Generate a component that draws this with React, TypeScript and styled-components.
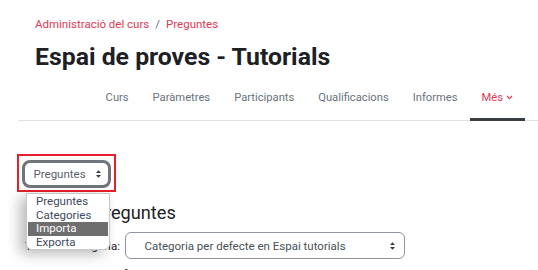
import React from "react";
import styled, { createGlobalStyle } from "styled-components";

const Global = createGlobalStyle`
  html, body { margin: 0; padding: 0; background: #fff; overflow: hidden; }
  body { font-family: Roboto, "Liberation Sans", sans-serif; color: #1d2125; }
  * { box-sizing: border-box; }
`;

const Page = styled.div`
  width: 538px;
  height: 270px;
  overflow: hidden;
`;

const Header = styled.header`
  padding: 15px 0 0 35px;
`;

const Breadcrumb = styled.nav`
  display: flex;
  align-items: center;
  gap: 6px;
  font-size: 11.5px;
  line-height: 18px;
  color: #de3a55;
`;

const Sep = styled.span`
  color: #6a737b;
`;

const Title = styled.h1`
  margin: 10px 0 0;
  font-size: 24.8px;
  line-height: 28px;
  font-weight: 700;
  color: #1d2125;
`;

const Nav = styled.ul`
  list-style: none;
  margin: 4px 0 0 18px;
  padding: 0 13px 0 0;
  display: flex;
  justify-content: flex-end;
  border-bottom: 1px solid #dee2e6;
`;

const Tab = styled.li<{ $active?: boolean }>`
  display: flex;
  align-items: center;
  gap: 3px;
  padding: 2px 12px 0;
  height: 46px;
  font-size: 11.2px;
  color: ${(p) => (p.$active ? "#de3a55" : "#6a737b")};
  border-bottom: 3px solid ${(p) => (p.$active ? "#3a3f44" : "transparent")};
  margin-bottom: -1px;
`;

const Content = styled.main`
  padding: 33px 25px 0 25px;
`;

const Annot = styled.div`
  position: relative;
  display: inline-flex;
  margin-left: -8px;
  padding: 4px 3px 2px 3px;
  border: 2px solid #e8202a;
`;

const SelectBox = styled.div<{ $focused?: boolean; $width: number }>`
  display: flex;
  align-items: center;
  justify-content: space-between;
  width: ${(p) => p.$width}px;
  height: ${(p) => (p.$focused ? 28 : 27)}px;
  padding: ${(p) => (p.$focused ? "0 6.5px 0 8.5px" : "0 8.5px 0 18px")};
  border: ${(p) => (p.$focused ? "3px solid #6f757b" : "1px solid #8f959e")};
  border-radius: ${(p) => (p.$focused ? 8 : 6)}px;
  font-size: 11.5px;
  color: ${(p) => (p.$focused ? "#5a6168" : "#495057")};
  background: #fff;
`;

const Popup = styled.ul`
  position: absolute;
  left: 7px;
  top: 37px;
  width: 84px;
  margin: 0;
  padding: 1px 1px 0;
  list-style: none;
  background: #fff;
  border: 1px solid #c8c8c8;
  border-radius: 0 0 6px 6px;
  box-shadow: -6px 4px 14px rgba(0, 0, 0, 0.28);
  z-index: 5;
  overflow: hidden;
`;

const Option = styled.li<{ $hl?: boolean }>`
  height: 13.5px;
  line-height: 13.5px;
  padding-left: 8px;
  font-size: 11.5px;
  color: ${(p) => (p.$hl ? "#fff" : "#3f4a60")};
  background: ${(p) => (p.$hl ? "#6e6e6e" : "transparent")};
`;

const Heading = styled.h2`
  margin: 9px 0 0;
  font-size: 18.2px;
  line-height: 24px;
  font-weight: 400;
  color: #1d2125;
`;

const Row = styled.div`
  display: flex;
  align-items: center;
  gap: 5.5px;
  margin-top: 7px;
`;

const Label = styled.label`
  font-size: 11.5px;
  color: #1d2125;
`;

const Para = styled.p`
  margin: 6px 0 0;
  font-size: 11.5px;
  line-height: 18px;
  color: #1d2125;
  white-space: nowrap;
`;

const Arrows = () => (
  <svg width="7" height="10" viewBox="0 0 7 10" aria-hidden>
    <path d="M3.5 1.2 L6 4 H1 Z" fill="#343a40" />
    <path d="M3.5 8.8 L6 6 H1 Z" fill="#343a40" />
  </svg>
);

const Chevron = () => (
  <svg width="7" height="5" viewBox="0 0 7 5" aria-hidden>
    <path d="M1 1 L3.5 3.6 L6 1" fill="none" stroke="#de3a55" strokeWidth="1.1" />
  </svg>
);

const tabs = ["Curs", "Paràmetres", "Participants", "Qualificacions", "Informes"];
const options = ["Preguntes", "Categories", "Importa", "Exporta"];

export default function App() {
  return (
    <Page>
      <Global />
      <Header>
        <Breadcrumb>
          <span>Administració del curs</span>
          <Sep>/</Sep>
          <span>Preguntes</span>
        </Breadcrumb>
        <Title>Espai de proves - Tutorials</Title>
      </Header>
      <Nav>
        {tabs.map((t) => (
          <Tab key={t}>{t}</Tab>
        ))}
        <Tab $active>
          Més <Chevron />
        </Tab>
      </Nav>
      <Content>
        <Annot>
          <SelectBox $focused $width={89}>
            <span>Preguntes</span>
            <Arrows />
          </SelectBox>
          <Popup>
            {options.map((o) => (
              <Option key={o} $hl={o === "Importa"}>
                {o}
              </Option>
            ))}
          </Popup>
        </Annot>
        <Heading>Banc de preguntes</Heading>
        <Row>
          <Label>Tria una categoria:</Label>
          <SelectBox $width={280}>
            <span>Categoria per defecte en Espai tutorials</span>
            <Arrows />
          </SelectBox>
        </Row>
        <Para>La categoria per defecte per a preguntes compartides en el context  Espai tutorials.</Para>
      </Content>
    </Page>
  );
}
